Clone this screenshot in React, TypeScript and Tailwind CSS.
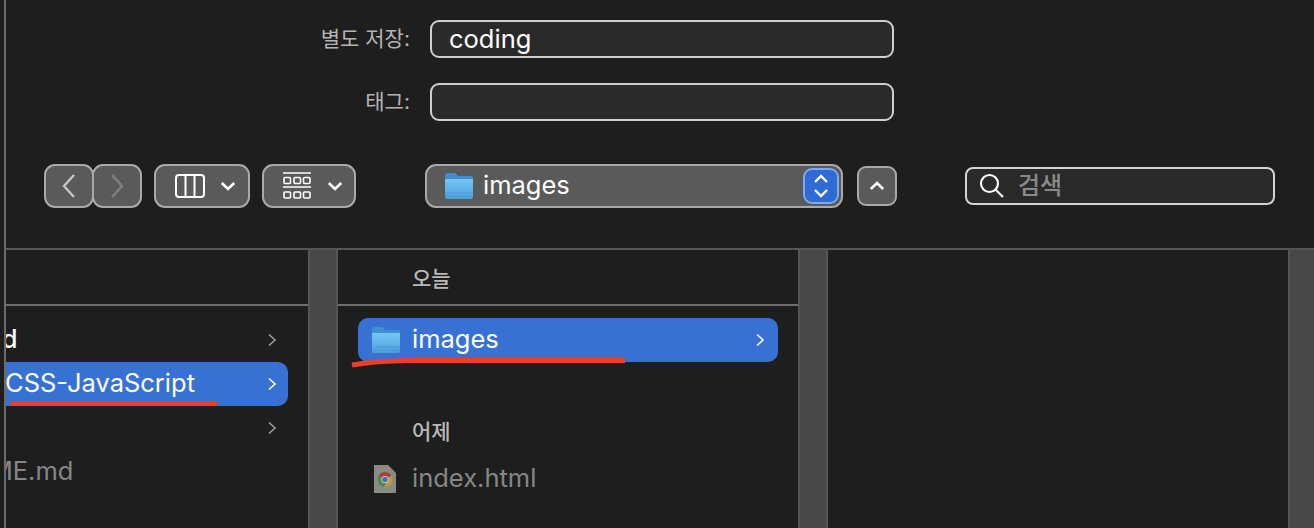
const font = "font-['Inter','Noto_Sans_CJK_KR',sans-serif]";

function FolderIcon() {
  return (
    <svg width="30" height="28" viewBox="0 0 30 28" className="shrink-0">
      <defs>
        <linearGradient id="folderFront" x1="0" y1="0" x2="0" y2="1">
          <stop offset="0" stopColor="#75c6f5" />
          <stop offset="1" stopColor="#4d9fdc" />
        </linearGradient>
      </defs>
      <path d="M1 4 Q1 1 4 1 H10 Q12 1 13 3 L14 4 H27 Q29 4 29 6 V10 H1 Z" fill="#3f8fd0" />
      <path d="M1 7 H29 V25 Q29 27 27 27 H3 Q1 27 1 25 Z" fill="url(#folderFront)" />
      <path d="M1 21 H29 M1 24 H29" stroke="#3f8fcf" strokeOpacity="0.5" strokeWidth="1" />
    </svg>
  );
}

function ChromeFile() {
  return (
    <svg width="22" height="28" viewBox="0 0 22 28" className="shrink-0">
      <path d="M0 0 H14 L22 8 V28 H0 Z" fill="#8c8a84" />
      <path d="M4.5 10.8 A 7.5 7.5 0 0 1 17.5 10.8 L14 12.5 A 4 4 0 0 0 8 12.5 Z" fill="#a8423a" />
      <path d="M4.5 10.8 A 7.5 7.5 0 0 0 10 22 L12 18.2 A 4 4 0 0 1 8 12.5 Z" fill="#4f8a55" />
      <path d="M17.5 10.8 A 7.5 7.5 0 0 1 10 22 L12 18.2 A 4 4 0 0 0 14 12.5 Z" fill="#b59a3e" />
      <circle cx="11" cy="14.5" r="3.6" fill="#d8d8d8" />
      <circle cx="11" cy="14.5" r="2.8" fill="#4a6fb0" />
    </svg>
  );
}

function RowChevron({ color = "#9b9b9b" }: { color?: string }) {
  return (
    <svg width="10" height="14" viewBox="0 0 10 14" fill="none" stroke={color} strokeWidth="1.6" className="shrink-0">
      <path d="M2 1.5 L8 7 L2 12.5" />
    </svg>
  );
}

function SmallDown() {
  return (
    <svg width="16" height="10" viewBox="0 0 16 10" fill="none" stroke="#ffffff" strokeWidth="2.6" className="shrink-0">
      <path d="M1.8 2 L8 8 L14.2 2" />
    </svg>
  );
}

function ToolButton({ className, children }: { className: string; children: React.ReactNode }) {
  return (
    <div className={`h-[44px] flex items-center rounded-[11px] border-2 border-[#a9a9a9] bg-[#5a5a5a] ${className}`}>
      {children}
    </div>
  );
}

function Field({ label, value }: { label: string; value?: string }) {
  return (
    <div className="flex items-center h-[38px]">
      <div className="w-[404px] text-right text-[21px] text-[#b4b4b4]">{label}</div>
      <div className="ml-[20px] w-[464px] h-[38px] flex items-center pl-[17px] rounded-[9px] border-2 border-[#cfcfcf] bg-[#2a2a2a] text-[25.5px] text-white">
        {value}
      </div>
    </div>
  );
}

function Scrollbar() {
  return <div className="w-[30px] shrink-0 bg-[#484848] border-x-2 border-[#555555]" />;
}

export default function App() {
  return (
    <div className={`w-[1314px] h-[528px] overflow-hidden bg-[#1e1e1e] pl-[4px] ${font}`}>
      <div className="h-full flex flex-col border-l-2 border-[#6c6c6c]">
        <div className="h-[248px] shrink-0 pt-[20px]">
          <div className="flex flex-col gap-[25px]">
            <Field label="별도 저장:" value="coding" />
            <Field label="태그:" />
          </div>

          <div className="flex items-center mt-[43px] pl-[38px]">
            <ToolButton className="w-[50px] justify-center">
              <svg width="16" height="26" viewBox="0 0 16 26" fill="none" stroke="#c4c4c4" strokeWidth="2.4">
                <path d="M13 2 L3 13 L13 24" />
              </svg>
            </ToolButton>
            <ToolButton className="w-[50px] -ml-[2px] justify-center">
              <svg width="16" height="26" viewBox="0 0 16 26" fill="none" stroke="#808080" strokeWidth="2.4">
                <path d="M3 2 L13 13 L3 24" />
              </svg>
            </ToolButton>
            <ToolButton className="w-[96px] ml-[12px] pl-[19px] gap-[15px]">
              <svg width="30" height="24" viewBox="0 0 30 24" fill="none" stroke="#ffffff" strokeWidth="2">
                <rect x="1" y="1" width="28" height="22" rx="3" />
                <path d="M10.5 1 V23 M19.5 1 V23" />
              </svg>
              <SmallDown />
            </ToolButton>
            <ToolButton className="w-[94px] ml-[12px] pl-[19px] gap-[16px]">
              <svg width="28" height="28" viewBox="0 0 28 28" fill="none" stroke="#ffffff" strokeWidth="1.6">
                <path d="M0 1 H28 M0 15 H28" />
                <rect x="1" y="5.5" width="6.5" height="6" rx="1" />
                <rect x="11" y="5.5" width="6.5" height="6" rx="1" />
                <rect x="20.5" y="5.5" width="6.5" height="6" rx="1" />
                <rect x="1" y="20" width="6.5" height="6" rx="1" />
                <rect x="11" y="20" width="6.5" height="6" rx="1" />
                <rect x="20.5" y="20" width="6.5" height="6" rx="1" />
              </svg>
              <SmallDown />
            </ToolButton>
            <ToolButton className="w-[418px] ml-[69px] pl-[17px] pr-[2px]">
              <FolderIcon />
              <span className="ml-[9px] mb-[2px] text-[25.5px] text-white">images</span>
              <div className="ml-auto w-[36px] h-[36px] flex items-center justify-center rounded-[9px] border-2 border-[#7ca9ef] bg-[#2f6bd3]">
                <svg width="16" height="26" viewBox="0 0 16 26" fill="none" stroke="#ffffff" strokeWidth="2.4">
                  <path d="M2 9 L8 3 L14 9 M2 17 L8 23 L14 17" />
                </svg>
              </div>
            </ToolButton>
            <div className="w-[40px] h-[40px] ml-[14px] flex items-center justify-center rounded-[9px] border-2 border-[#a9a9a9] bg-[#5a5a5a]">
              <svg width="16" height="10" viewBox="0 0 16 10" fill="none" stroke="#ffffff" strokeWidth="2.6">
                <path d="M1.8 8 L8 2 L14.2 8" />
              </svg>
            </div>
            <div className="w-[310px] h-[38px] ml-[68px] flex items-center pl-[12px] rounded-[8px] border-2 border-[#d4d4d4] bg-[#2a2a2a]">
              <svg width="26" height="26" viewBox="0 0 26 26" fill="none" stroke="#ffffff" strokeWidth="2.2">
                <circle cx="10.5" cy="10.5" r="8.5" />
                <path d="M16.5 16.5 L24 24" />
              </svg>
              <span className="ml-[13px] text-[24px] font-medium text-[#8a8a8a]">검색</span>
            </div>
          </div>
        </div>

        <div className="relative flex-1 flex border-t-2 border-[#555555] min-h-0">
          {/* first column, names cut off by the window's left edge */}
          <div className="w-[302px] shrink-0 overflow-hidden">
            <div className="h-[56px] border-b-2 border-[#6e6e6e]" />
            <div className="pt-[12px] pr-[20px] flex flex-col">
              <div className="h-[44px] flex items-center justify-between pr-[11px]">
                <span className="-ml-[108px] mb-[2px] text-[25.5px] font-medium text-white whitespace-nowrap">download</span>
                <RowChevron />
              </div>
              <div className="h-[44px] flex items-center justify-between pr-[11px] rounded-r-[10px] bg-[#3871d4]">
                <span className="-ml-[1px] mb-[2px] text-[25.5px] text-white whitespace-nowrap">CSS-JavaScript</span>
                <RowChevron color="#ffffff" />
              </div>
              <div className="h-[44px] flex items-center justify-end pr-[11px]">
                <RowChevron />
              </div>
              <div className="h-[44px] flex items-center pr-[11px]">
                <span className="-ml-[84px] mb-[2px] text-[25.5px] text-[#868686] whitespace-nowrap">README.md</span>
              </div>
            </div>
          </div>
          <Scrollbar />

          {/* second column */}
          <div className="w-[460px] shrink-0">
            <div className="h-[56px] flex items-center pl-[74px] pt-[4px] border-b-2 border-[#6e6e6e] text-[21px] font-medium text-[#b8b8b8]">
              오늘
            </div>
            <div className="pt-[12px] pl-[20px] pr-[20px]">
              <div className="h-[44px] flex items-center pl-[13px] pr-[13px] rounded-[10px] bg-[#3871d4]">
                <FolderIcon />
                <span className="ml-[11px] mb-[2px] text-[25.5px] text-white">images</span>
                <span className="ml-auto"><RowChevron color="#ffffff" /></span>
              </div>
              <div className="mt-[58px] pl-[54px] h-[24px] flex items-center text-[21px] font-medium text-[#b8b8b8]">
                어제
              </div>
              <div className="mt-[13px] h-[44px] flex items-center pl-[16px]">
                <ChromeFile />
                <span className="ml-[16px] mb-[2px] text-[25.5px] text-[#868686]">index.html</span>
              </div>
            </div>
          </div>
          <Scrollbar />

          <div className="w-[460px] shrink-0" />
          <Scrollbar />

          {/* red pen marks drawn over the screenshot */}
          <svg className="absolute left-[-6px] top-[-250px] pointer-events-none" width="1314" height="528" fill="none">
            <path d="M11 403.5 H217" stroke="#ea4029" strokeWidth="5" />
            <path d="M352 365 Q375 361 410 360.5 H625" stroke="#ea4029" strokeWidth="5" />
          </svg>
        </div>
      </div>
    </div>
  );
}
